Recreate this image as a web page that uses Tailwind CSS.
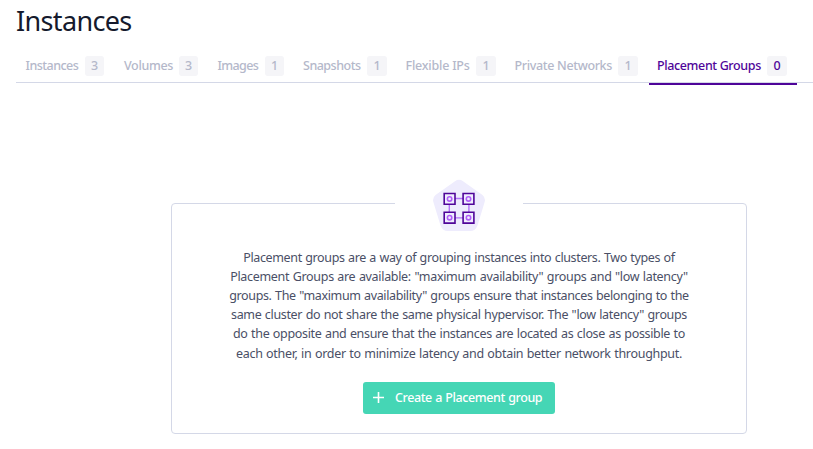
<!DOCTYPE html>
<html lang="en">
<head>
<meta charset="utf-8">
<title>Instances</title>
<script src="https://cdn.jsdelivr.net/npm/@tailwindcss/browser@4"></script>
</head>
<body class="h-[449px] w-[813px] overflow-hidden bg-white pl-4 font-['Noto_Sans',sans-serif] text-[12.5px]">
<h1 class="h-[49px] pt-[3px] text-[27px] leading-[36px] tracking-[-0.65px] text-[#151a2d]">Instances</h1>
<nav class="flex h-[34px] border-b border-[#d4d8e7] font-medium whitespace-nowrap text-[#b4b8ca]">
  <a class="flex h-[34px] w-[98px] items-center pl-[9px]"><span class="w-[60px] pl-[0.5px] tracking-[-0.53px]">Instances</span><span class="h-5 w-[19px] rounded-[3px] bg-[#f5f5f8] text-center leading-5">3</span></a>
  <a class="flex h-[34px] w-[94px] items-center pl-[10px]"><span class="w-[55px] tracking-[-0.35px]">Volumes</span><span class="h-5 w-[19px] rounded-[3px] bg-[#f5f5f8] text-center leading-5">3</span></a>
  <a class="flex h-[34px] w-[86px] items-center pl-[9px]"><span class="w-[48px] pl-[0.5px] tracking-[-0.6px]">Images</span><span class="h-5 w-[19px] rounded-[3px] bg-[#f5f5f8] text-center leading-5">1</span></a>
  <a class="flex h-[34px] w-[103px] items-center pl-[9px]"><span class="w-[64px] tracking-[-0.5px]">Snapshots</span><span class="h-5 w-5 rounded-[3px] bg-[#f5f5f8] text-center leading-5">1</span></a>
  <a class="flex h-[34px] w-[109px] items-center pl-[8px]"><span class="w-[71px] pl-[0.6px] tracking-[-0.23px]">Flexible IPs</span><span class="h-5 w-5 rounded-[3px] bg-[#f5f5f8] text-center leading-5">1</span></a>
  <a class="flex h-[34px] w-[143px] items-center pl-[8px]"><span class="w-[104px] pl-[0.6px] tracking-[-0.35px]">Private Networks</span><span class="h-5 w-5 rounded-[3px] bg-[#f5f5f8] text-center leading-5">1</span></a>
  <a class="flex h-[36px] w-[148px] items-center border-b-2 border-[#4f0599] pl-[8px] text-[#4f0599]"><span class="w-[110px] tracking-[-0.37px]">Placement Groups</span><span class="h-5 w-5 rounded-[3px] bg-[#f5f5f8] text-center leading-5">0</span></a>
</nav>
<main class="mt-[120px] ml-[155px] flex h-[231px] w-[576px] flex-col items-center rounded-[4px] border border-[#d4d8e7]">
  <div class="-mt-[25px] flex h-[52px] w-32 shrink-0 justify-center bg-white">
    <svg class="h-[52px] w-[52px]" viewBox="0 0 52 52" fill="none">
      <path d="M22 2.2Q26 -.5 30 2.2L49.5 16Q53 19 51.5 23.5L44.5 46.5Q42.500 52 37 52H15Q9.500 52 7.500 46.500L.5 23.500Q-1 19 2.500 16Z" fill="#eeecfd"/>
      <path d="M16.300 19.500H35.900V38.900H16.300Z" stroke="#b472fa" stroke-width="1.400"/>
      <g fill="#efedfe" stroke="#4f0599" stroke-width="1.600">
        <path d="M11.200 14.500h10.800v10.800h-10.800zM30.100 14.500h10.800v10.800h-10.800zM11.200 33.300h10.800v10.800h-10.800zM30.100 33.300h10.800v10.800h-10.800z"/>
      </g>
      <g stroke="#b05cf8" stroke-width="1.600">
        <circle cx="16.600" cy="19.900" r="2.200"/><circle cx="35.500" cy="19.900" r="2.200"/>
        <circle cx="16.600" cy="38.700" r="2.200"/><circle cx="35.500" cy="38.700" r="2.200"/>
      </g>
    </svg>
  </div>
  <p class="mt-[16.6px] text-center leading-[19.2px] whitespace-nowrap text-[#4a4f66]">
    <span class="block tracking-[-0.363px] [word-spacing:0.55px]">Placement groups are a way of grouping instances into clusters. Two types of</span>
    <span class="block tracking-[-0.317px] [word-spacing:0.6px]">Placement Groups are available: "maximum availability" groups and "low latency"</span>
    <span class="block tracking-[-0.371px] [word-spacing:0.6px]">groups. The "maximum availability" groups ensure that instances belonging to the</span>
    <span class="block tracking-[-0.344px] [word-spacing:0.6px]">same cluster do not share the same physical hypervisor. The "low latency" groups</span>
    <span class="block tracking-[-0.336px] [word-spacing:0.6px]">do the opposite and ensure that the instances are located as close as possible to</span>
    <span class="block tracking-[-0.312px] [word-spacing:0.6px]">each other, in order to minimize latency and obtain better network throughput.</span>
  </p>
  <button class="mt-[19.4px] flex h-8 w-48 shrink-0 items-center rounded-[3px] bg-[#45d6b5] pl-[10px] font-medium whitespace-nowrap text-white">
    <svg class="mr-[11px] mb-px h-[11px] w-[11px]" viewBox="0 0 11 11" stroke="currentColor" stroke-width="1.600"><path d="M5.500 0V11M0 5.500H11"/></svg>
    <span class="tracking-[-0.4px] [word-spacing:0.5px]">Create a Placement group</span>
  </button>
</main>
</body>
</html>
